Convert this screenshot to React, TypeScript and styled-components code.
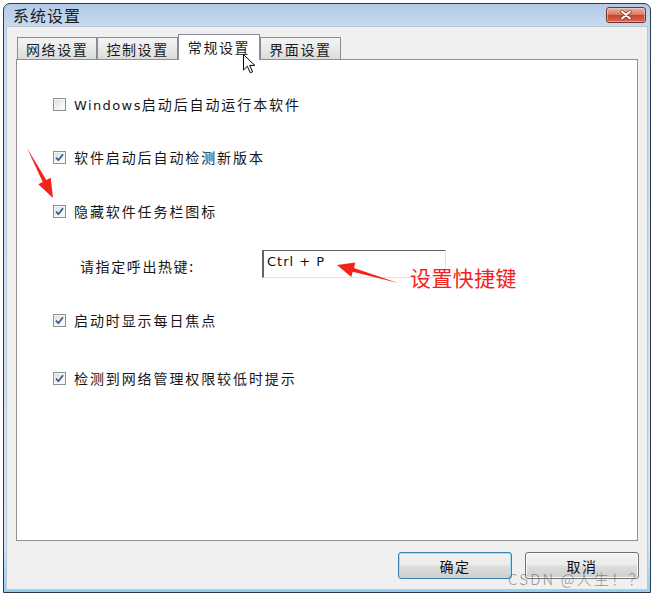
import React from 'react';
import styled, { createGlobalStyle } from 'styled-components';

const CJK = `"Noto Sans CJK SC", "Noto Sans", sans-serif`;
const LAT = `"DejaVu Sans", "Noto Sans CJK SC", sans-serif`;

const GlobalStyle = createGlobalStyle`
  html, body { margin: 0; padding: 0; background: #ffffff; }
  body { width: 657px; height: 597px; overflow: hidden; font-family: ${CJK}; }
`;

const Page = styled.div`
  position: relative;
  width: 657px;
  height: 597px;
  padding: 3px 0 0 3px;
  box-sizing: border-box;
`;

const Window = styled.div`
  width: 648px;
  height: 590px;
  box-sizing: border-box;
  border: 1px solid #2c3a4a;
  border-radius: 7px 7px 0 0;
  background: linear-gradient(180deg, #b3cbe7 0px, #c8daef 22px, #d7e4f2 92%, #8fd0ee 100%);
  display: flex;
  flex-direction: column;
`;

const TitleBar = styled.div`
  height: 22px;
  display: flex;
  align-items: center;
  justify-content: space-between;
  padding: 0 4px 0 9px;
`;

const Title = styled.span`
  font-family: ${CJK};
  font-size: 16px;
  letter-spacing: 1px;
  color: #1b1b1b;
`;

const CloseButton = styled.div`
  width: 40px;
  height: 16px;
  box-sizing: border-box;
  border: 1px solid #7a302a;
  border-radius: 3px;
  background: linear-gradient(180deg, #eab0a2 0%, #dc7e6a 45%, #c8452e 52%, #d4684f 100%);
  display: flex;
  align-items: center;
  justify-content: center;
  box-shadow: inset 0 0 0 1px rgba(255, 220, 210, 0.5);
`;

const Body = styled.div`
  flex: 1;
  margin: 0 2px 2px 2px;
  border: 1px solid #b9c7d6;
  background: #f0f0f0;
  padding: 0 9px 0 9px;
  display: flex;
  flex-direction: column;
`;

const TabsRow = styled.div`
  height: 33px;
  display: flex;
  align-items: flex-end;
  padding-left: 1px;
  margin-bottom: -1px;
`;

const Tab = styled.div<{ $active?: boolean }>`
  box-sizing: border-box;
  height: ${p => (p.$active ? 26 : 23)}px;
  padding: ${p => (p.$active ? '2px 9px 0' : '0 8px')};
  border: 1px solid #898c95;
  border-bottom: none;
  background: ${p =>
    p.$active ? '#ffffff' : 'linear-gradient(180deg, #f4f4f4 0%, #e8e8e8 50%, #dadada 100%)'};
  display: flex;
  align-items: ${p => (p.$active ? 'flex-start' : 'center')};
  font-family: ${CJK};
  font-size: 14px;
  letter-spacing: 1.6px;
  color: #1a1a1a;
  position: ${p => (p.$active ? 'relative' : 'static')};
  z-index: ${p => (p.$active ? 2 : 'auto')};
`;

const Panel = styled.div`
  position: relative;
  z-index: 1;
  height: 482px;
  box-sizing: border-box;
  border: 1px solid #8e9297;
  background: #ffffff;
  padding-left: 36px;
  display: flex;
  flex-direction: column;
`;

const OptionRow = styled.div<{ $top: number }>`
  margin-top: ${p => p.$top}px;
  height: 20px;
  display: flex;
  align-items: center;
  gap: 8px;
`;

const Box = styled.div`
  width: 13px;
  height: 13px;
  box-sizing: border-box;
  border: 1px solid #8e8f8f;
  background: linear-gradient(135deg, #d8d8d8 0%, #f4f4f4 60%, #ffffff 100%);
  box-shadow: inset 0 0 0 1px #f6f6f6;
  display: flex;
  align-items: center;
  justify-content: center;
`;

const Label = styled.span`
  font-family: ${CJK};
  font-size: 14px;
  letter-spacing: 1.9px;
  color: #161616;
  white-space: nowrap;
`;

const Latin = styled.span`
  font-family: ${LAT};
  font-size: 13px;
  letter-spacing: 1.4px;
`;

const HotkeyRow = styled.div<{ $top: number }>`
  margin-top: ${p => p.$top}px;
  height: 28px;
  display: flex;
  align-items: center;
  padding-left: 27px;
`;

const HotkeyLabel = styled(Label)`
  width: 182px;
  letter-spacing: 1.6px;
  padding-top: 3px;
`;

const TextBox = styled.div`
  width: 184px;
  height: 28px;
  box-sizing: border-box;
  border-top: 1px solid #646464;
  border-left: 2px solid #646464;
  border-right: 1px solid #e2e2e2;
  border-bottom: 1px solid #e2e2e2;
  background: #ffffff;
  padding: 2px 3px;
  font-family: ${LAT};
  font-size: 13px;
  letter-spacing: 1px;
  line-height: 18px;
  white-space: pre;
  color: #111;
`;

const ButtonsRow = styled.div`
  margin-top: 11px;
  margin-right: -1px;
  display: flex;
  justify-content: flex-end;
  gap: 13px;
`;

const Button = styled.div<{ $default?: boolean }>`
  width: 114px;
  height: 27px;
  box-sizing: border-box;
  border: 1px solid ${p => (p.$default ? '#3c7fb1' : '#707070')};
  border-radius: 3px;
  background: linear-gradient(180deg, #f2f2f2 0%, #ebebeb 48%, #dddddd 52%, #cfcfcf 100%);
  box-shadow: ${p => (p.$default ? 'inset 0 0 0 1px #a8dbf6' : 'inset 0 0 0 1px #fbfbfb')};
  display: flex;
  align-items: center;
  justify-content: center;
  font-family: ${CJK};
  font-size: 14px;
  letter-spacing: 1.5px;
  color: #111;
`;

const Overlay = styled.svg`
  position: absolute;
  left: 0;
  top: 0;
  pointer-events: none;
  z-index: 5;
`;

const Annotation = styled.span`
  position: absolute;
  left: 410px;
  top: 265px;
  font-family: ${CJK};
  font-size: 21px;
  line-height: 24px;
  letter-spacing: 0.4px;
  color: #f5221b;
  z-index: 5;
  white-space: nowrap;
`;

const Watermark = styled.span`
  position: absolute;
  left: 508px;
  top: 568px;
  font-family: ${CJK};
  font-size: 15px;
  font-weight: 300;
  letter-spacing: 2.2px;
  color: rgba(110, 110, 110, 0.75);
  z-index: 6;
  white-space: nowrap;
`;

const Check = () => (
  <svg width="9" height="9" viewBox="0 0 9 9">
    <path d="M1 4.6 L3.4 7.2 L8 1.2" fill="none" stroke="#3d5a9a" strokeWidth="1.8" strokeLinejoin="round" />
  </svg>
);

const CheckBox: React.FC<{ checked?: boolean }> = ({ checked }) => <Box>{checked ? <Check /> : null}</Box>;

export default function App() {
  return (
    <>
      <GlobalStyle />
      <Page>
        <Window>
          <TitleBar>
            <Title>系统设置</Title>
            <CloseButton>
              <svg width="14" height="10" viewBox="0 0 14 10">
                <path d="M3 1.5 L11 8.5 M11 1.5 L3 8.5" stroke="#6b2a22" strokeWidth="3.2" strokeLinecap="round" />
                <path d="M3 1.5 L11 8.5 M11 1.5 L3 8.5" stroke="#ffffff" strokeWidth="2" strokeLinecap="round" />
              </svg>
            </CloseButton>
          </TitleBar>
          <Body>
            <TabsRow>
              <Tab>网络设置</Tab>
              <Tab>控制设置</Tab>
              <Tab $active>常规设置</Tab>
              <Tab>界面设置</Tab>
            </TabsRow>
            <Panel>
              <OptionRow $top={34}>
                <CheckBox />
                <Label>
                  <Latin>Windows</Latin>启动后自动运行本软件
                </Label>
              </OptionRow>
              <OptionRow $top={33}>
                <CheckBox checked />
                <Label>软件启动后自动检测新版本</Label>
              </OptionRow>
              <OptionRow $top={34}>
                <CheckBox checked />
                <Label>隐藏软件任务栏图标</Label>
              </OptionRow>
              <HotkeyRow $top={29}>
                <HotkeyLabel>请指定呼出热键:</HotkeyLabel>
                <TextBox>{'Ctrl + P'}</TextBox>
              </HotkeyRow>
              <OptionRow $top={32}>
                <CheckBox checked />
                <Label>启动时显示每日焦点</Label>
              </OptionRow>
              <OptionRow $top={38}>
                <CheckBox checked />
                <Label>检测到网络管理权限较低时提示</Label>
              </OptionRow>
            </Panel>
            <ButtonsRow>
              <Button $default>确定</Button>
              <Button>取消</Button>
            </ButtonsRow>
          </Body>
        </Window>
        <Overlay width="657" height="597" viewBox="0 0 657 597">
          <polygon
            points="27,148 46.3,180 50.7,177.7 53,198 38.3,184.3 42.7,182"
            fill="#f5221b"
          />
          <polygon
            points="337,265 355.3,262.5 354,267.9 398,283 352.7,271.7 351.3,277"
            fill="#f5221b"
          />
          <path
            d="M243.5 54.5 L243.5 70 L247.3 66.3 L250.3 72.8 L252.6 71.8 L249.7 65.4 L254.8 65.4 Z"
            fill="#ffffff"
            stroke="#000000"
            strokeWidth="1"
            strokeLinejoin="round"
          />
        </Overlay>
        <Annotation>设置快捷键</Annotation>
        <Watermark>CSDN @人生！？</Watermark>
      </Page>
    </>
  );
}
